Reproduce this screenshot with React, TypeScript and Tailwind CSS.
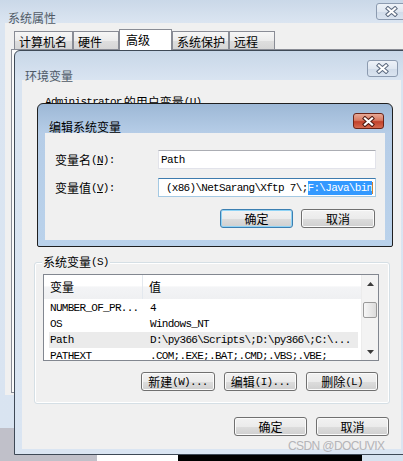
import React from "react";

const cjk = "font-['Noto_Sans_CJK_SC',sans-serif] text-[12px] leading-[14px]";
const mono = "font-['Liberation_Mono',monospace] text-[11px] tracking-[-0.7px] leading-[14px]";

function XGlyph({ outline }: { outline: string }) {
  return (
    <svg width="13" height="11" viewBox="0 0 13 11">
      <path d="M3 2.5 L10 8.5 M10 2.5 L3 8.5" stroke={outline} strokeWidth="4.2" strokeLinecap="square" fill="none" />
      <path d="M3 2.5 L10 8.5 M10 2.5 L3 8.5" stroke="#ffffff" strokeWidth="2.2" strokeLinecap="square" fill="none" />
    </svg>
  );
}

function GreyClose({ className }: { className: string }) {
  return (
    <div
      className={
        "absolute flex items-center justify-center w-[31px] h-[17px] rounded-[3px] border border-[#8c9bb0] bg-[linear-gradient(180deg,#edf2f8_0%,#dfe7f1_50%,#d0dbe9_52%,#dae4f0_100%)] " +
        className
      }
    >
      <XGlyph outline="#5d6b80" />
    </div>
  );
}

function RedClose({ className }: { className: string }) {
  return (
    <div
      className={
        "absolute flex items-center justify-center w-[31px] h-[16px] rounded-[3px] border border-[#6b2418] bg-[linear-gradient(180deg,#e8a997_0%,#d87a62_45%,#c2412b_55%,#d56a50_100%)] " +
        className
      }
    >
      <XGlyph outline="#4e1a12" />
    </div>
  );
}

function Btn({ w, children, def }: { w: string; children: React.ReactNode; def?: boolean }) {
  return (
    <div
      className={
        "flex h-[19px] items-center justify-center rounded-[3px] border bg-[linear-gradient(180deg,#f2f2f2_0%,#ebebeb_50%,#dddddd_51%,#cfcfcf_100%)] " +
        (def
          ? "border-[#3c7fb1] shadow-[inset_0_0_0_1px_#8fd3f5] "
          : "border-[#707070] shadow-[inset_0_0_0_1px_#fbfbfb] ") +
        w
      }
    >
      {children}
    </div>
  );
}

function Tab({ w, children, sel }: { w: string; children: React.ReactNode; sel?: boolean }) {
  return (
    <div
      className={
        "flex items-center border border-b-0 border-[#898c95] " +
        (sel
          ? "h-[21px] -mb-px bg-white pl-[6px] pb-[1px] "
          : "h-[18px] pl-[4px] pt-[2px] bg-[linear-gradient(180deg,#f6f6f6_0%,#ececec_50%,#dedede_52%,#d6d6d6_100%)] ") +
        w
      }
    >
      <span className={cjk + " text-black"}>{children}</span>
    </div>
  );
}

const rows: [string, string][] = [
  ["NUMBER_OF_PR...", "4"],
  ["OS", "Windows_NT"],
  ["Path", "D:\\py366\\Scripts\\;D:\\py366\\;C:\\..."],
  ["PATHEXT", ".COM;.EXE;.BAT;.CMD;.VBS;.VBE;"],
];

function Arrow({ up }: { up?: boolean }) {
  return (
    <svg width="7" height="4" viewBox="0 0 7 4">
      <path d={up ? "M0 4 L3.5 0 L7 4 Z" : "M0 0 L7 0 L3.5 4 Z"} fill="#3b3b3b" />
    </svg>
  );
}

export default function App() {
  return (
    <div className="relative h-[461px] w-[403px] overflow-hidden bg-[#c0c0c9]">
      {/* desktop strip */}
      <div className="absolute left-0 top-[455px] flex h-[6px] w-[403px]">
        <div className="w-[97px] bg-[#c0c0c9]" />
        <div className="w-[81px] bg-white" />
        <div className="w-[184px] bg-black" />
        <div className="flex-1 bg-[#d6e2ef]" />
      </div>

      {/* 系统属性 window */}
      <div className="absolute left-0 top-0 h-[428px] w-[440px] bg-[linear-gradient(180deg,#cad8e8_0px,#dbe5f1_23px,#d9e4f1_100%)]">
        <div className="h-[23px] pl-[8px] pt-[5px]">
          <span className={cjk + " text-[#525b66]"}>系统属性</span>
        </div>
        <GreyClose className="left-[376px] top-[3px]" />
        <div className="ml-[5px] h-[372px] bg-[#f0f0f0] pl-[6px] pt-[6px]">
          <div className="relative z-10 flex h-[20px] items-end pl-[3px]">
            <Tab w="w-[59px]">计算机名</Tab>
            <Tab w="w-[46px]">硬件</Tab>
            <Tab w="w-[53px]" sel>
              高级
            </Tab>
            <Tab w="w-[57px]">系统保护</Tab>
            <Tab w="w-[46px]">远程</Tab>
          </div>
          <div className="h-[344px] border border-[#898c95] bg-[#fbfbfb]" />
        </div>
      </div>

      {/* 环境变量 window */}
      <div className="absolute left-[14px] top-[50px] h-[405px] w-[395px] rounded-t-[6px] border border-[#3e4956] bg-[linear-gradient(180deg,#c8d7e8_0px,#d9e4f1_29px,#dae5f2_100%)]">
        <div className="h-[29px] pl-[10px] pt-[12px]">
          <span className={cjk + " text-[#4e5966]"}>环境变量</span>
        </div>
        <GreyClose className="left-[352px] top-[9px]" />
        <div className="mx-[7px] flex h-[369px] flex-col bg-[#f0f0f0]">
          <div className="ml-[23px] mt-[15px] flex h-[14px] items-center text-black">
            <span className={mono}>Administrator</span>
            <span className={cjk + " ml-[2px]"}>的用户变量</span>
            <span className={mono}>(U)</span>
          </div>

          {/* 系统变量 group */}
          <div className="relative ml-[12px] mr-[11px] mt-[153px] flex h-[142px] flex-col rounded-[3px] border border-[#d5dfe5] shadow-[inset_0_0_0_1px_#ffffff]">
            <div className="absolute -top-[8px] left-[7px] flex items-center bg-[#f0f0f0] px-[1px] text-black">
              <span className={cjk}>系统变量</span>
              <span className={mono}>(S)</span>
            </div>
            <div className="ml-[8px] mt-[11px] flex h-[87px] w-[336px] border border-[#828790] bg-white">
              <div className="flex w-[317px] flex-col overflow-hidden">
                <div className="flex h-[24px] shrink-0 bg-[linear-gradient(180deg,#ffffff_0%,#ffffff_45%,#f3f4f6_50%,#eff0f2_100%)] text-black">
                  <div className="flex w-[99px] items-center border-r border-[#e3e8ee] pl-[6px]">
                    <span className={cjk}>变量</span>
                  </div>
                  <div className="flex items-center pl-[6px]">
                    <span className={cjk}>值</span>
                  </div>
                </div>
                <div className="flex flex-col pl-[5px] pr-[3px] pt-[1px]">
                  {rows.map(([a, b]) => (
                    <div
                      key={a}
                      className={"flex h-[16px] shrink-0 items-center text-black " + (a === "Path" ? "bg-[#ebebeb]" : "")}
                    >
                      <div className={mono + " w-[95px] whitespace-pre pl-[1px]"}>{a}</div>
                      <div className={mono + " whitespace-pre pl-[6px]"}>{b}</div>
                    </div>
                  ))}
                </div>
              </div>
              <div className="flex w-[17px] flex-col border-l border-[#ececec] bg-[#f3f3f3]">
                <div className="flex h-[17px] items-center justify-center">
                  <Arrow up />
                </div>
                <div className="flex-1 px-[1px] pt-[10px]">
                  <div className="h-[16px] rounded-[2px] border border-[#9a9a9a] bg-[linear-gradient(90deg,#f7f7f7_0%,#e9e9e9_50%,#dcdcdc_100%)]" />
                </div>
                <div className="flex h-[17px] items-center justify-center">
                  <Arrow />
                </div>
              </div>
            </div>
            <div className="mt-[11px] flex justify-end gap-[9px] pr-[11px] text-black">
              <Btn w="w-[74px]">
                <span className={cjk}>新建</span>
                <span className={mono}>(W)...</span>
              </Btn>
              <Btn w="w-[73px]">
                <span className={cjk}>编辑</span>
                <span className={mono}>(I)...</span>
              </Btn>
              <Btn w="w-[72px]">
                <span className={cjk}>删除</span>
                <span className={mono}>(L)</span>
              </Btn>
            </div>
          </div>

          <div className="mt-[13px] flex justify-end gap-[9px] pr-[12px] text-black">
            <Btn w="w-[73px]">
              <span className={cjk}>确定</span>
            </Btn>
            <Btn w="w-[73px]">
              <span className={cjk}>取消</span>
            </Btn>
          </div>
        </div>
      </div>

      {/* 编辑系统变量 dialog */}
      <div className="absolute left-[37px] top-[103px] h-[144px] w-[356px] rounded-t-[6px] rounded-b-[2px] border border-[#1f1f1f] bg-[linear-gradient(180deg,#9db8d6_0px,#b6cde7_29px,#bad2eb_100%)]">
        <div className="h-[29px] pl-[11px] pt-[10px]">
          <span className={cjk + " text-black"}>编辑系统变量</span>
        </div>
        <RedClose className="left-[315px] top-[9px]" />
        <div className="mx-[7px] flex h-[107px] flex-col bg-[#f0f0f0] pt-[17px] text-black">
          <div className="flex h-[19px] items-center">
            <div className="flex w-[113px] items-center pl-[10px]">
              <span className={cjk}>变量名</span>
              <span className={mono}>
                (<span className="underline">N</span>):
              </span>
            </div>
            <div className="flex h-[19px] w-[218px] items-center border border-[#e2e3ea] border-t-[#abadb3] bg-white pl-[2px]">
              <span className={mono}>Path</span>
            </div>
          </div>
          <div className="mt-[9px] flex h-[19px] items-center">
            <div className="flex w-[113px] items-center pl-[10px]">
              <span className={cjk}>变量值</span>
              <span className={mono}>
                {" "}(<span className="underline">V</span>):
              </span>
            </div>
            <div className="flex h-[19px] w-[218px] items-center overflow-hidden border border-[#a4c9e3] border-t-[#3d7bad] bg-white pl-[1px]">
              <span className={mono + " whitespace-pre"}>{" (x86)\\NetSarang\\Xftp 7\\;"}</span>
              <span className={mono + " whitespace-pre bg-[#3399ff] leading-[12px] text-white"}>{"F:\\Java\\bin"}</span>
              <span className="h-[12px] w-px shrink-0 bg-[#d08030]" />
            </div>
          </div>
          <div className="mt-[12px] flex justify-end gap-[8px] pr-[10px]">
            <Btn w="w-[73px]" def>
              <span className={cjk}>确定</span>
            </Btn>
            <Btn w="w-[74px]">
              <span className={cjk}>取消</span>
            </Btn>
          </div>
        </div>
      </div>

      {/* watermark */}
      <div className="absolute left-[288px] top-[439px] font-['Liberation_Sans',sans-serif] text-[12px] leading-[14px] tracking-[-0.6px] text-[#b4b4b8]">
        CSDN @DOCUVIX
      </div>
    </div>
  );
}
